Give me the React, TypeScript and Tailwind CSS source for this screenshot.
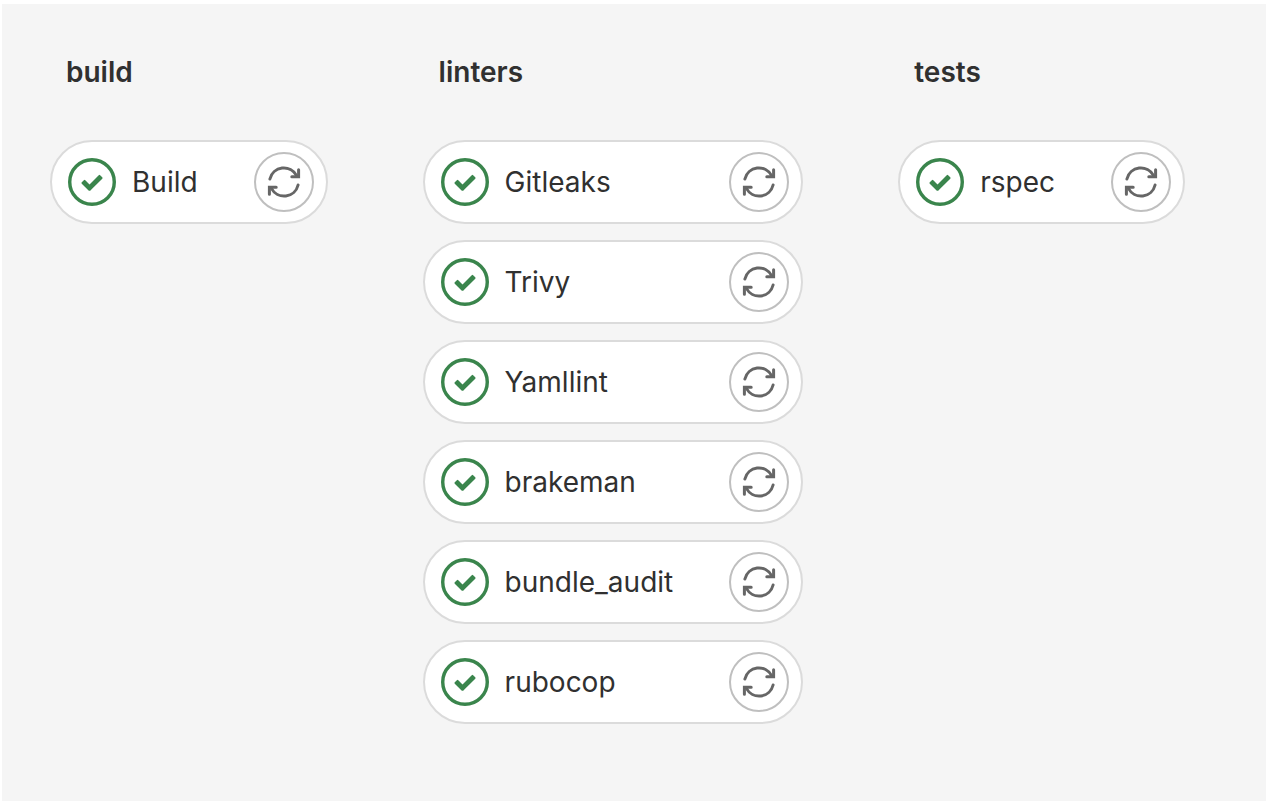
type Stage = { name: string; jobs: string[] };

const stages: Stage[] = [
  { name: 'build', jobs: ['Build'] },
  {
    name: 'linters',
    jobs: ['Gitleaks', 'Trivy', 'Yamllint', 'brakeman', 'bundle_audit', 'rubocop'],
  },
  { name: 'tests', jobs: ['rspec'] },
];

function SuccessIcon() {
  return (
    <svg viewBox="0 0 14 14" className="size-12 shrink-0 text-[#3a854c]" role="img" aria-label="Passed">
      <circle cx="7" cy="7" r="6.5" fill="none" stroke="currentColor" />
      <path
        fill="currentColor"
        d="M6.278 7.697L5.045 6.464a.296.296 0 0 0-.42-.002l-.613.614a.298.298 0 0 0 .002.42l1.91 1.909a.5.5 0 0 0 .703.005l.265-.265L9.997 6.04a.291.291 0 0 0-.009-.408l-.614-.614a.29.29 0 0 0-.408-.009L6.278 7.697z"
      />
    </svg>
  );
}

function RetryIcon() {
  return (
    <svg
      viewBox="0 0 16 16"
      className="size-8 overflow-visible"
      fill="none"
      stroke="currentColor"
      strokeWidth="1.5"
      strokeLinecap="round"
      aria-hidden="true"
    >
      <path d="M.95 6.5A7.2 7.2 0 0 1 14.3 4.8" />
      <path d="M15.3 1.9v3.5h-3.4" />
      <path d="M15.05 9.5A7.2 7.2 0 0 1 1.7 11.2" />
      <path d="M.7 14.1v-3.5h3.4" />
    </svg>
  );
}

function Job({ name }: { name: string }) {
  return (
    <li className="flex items-center rounded-full border-2 border-[#dbdbdb] bg-white py-2.5 pr-3 pl-4">
      <a href="#job" className="flex grow items-center gap-4 pr-14 text-[#303030]">
        <SuccessIcon />
        <span>{name}</span>
      </a>
      <button
        type="button"
        aria-label={`Run ${name} again`}
        className="flex size-15 shrink-0 items-center justify-center rounded-full border-2 border-[#bfbfbf] bg-white text-[#666]"
      >
        <RetryIcon />
      </button>
    </li>
  );
}

export default function App() {
  return (
    <div className="min-h-screen bg-white pt-1 pl-0.5 font-['Inter',sans-serif] text-[28px] leading-10 text-[#303030]">
      <main className="flex min-h-[calc(100vh-5px)] items-start gap-[95px] bg-[#f5f5f5] px-12 pt-12 pb-19">
        {stages.map((stage) => (
          <section key={stage.name}>
            <h2 className="mb-12 px-4 font-semibold">{stage.name}</h2>
            <ul className="flex flex-col gap-4">
              {stage.jobs.map((job) => (
                <Job key={job} name={job} />
              ))}
            </ul>
          </section>
        ))}
      </main>
    </div>
  );
}
